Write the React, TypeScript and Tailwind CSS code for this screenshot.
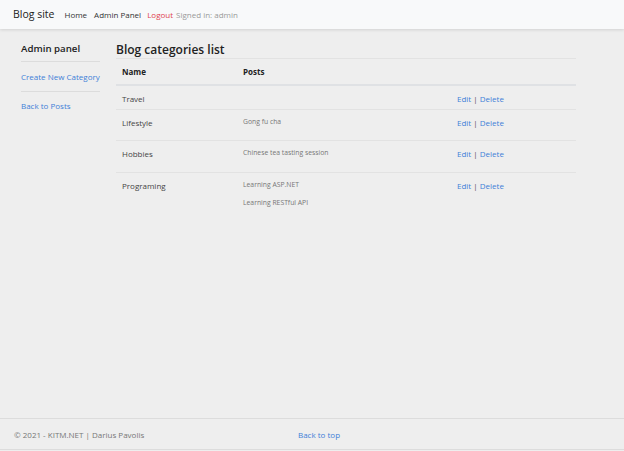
import React from 'react';

const font = { fontFamily: '"Open Sans", "Noto Sans", sans-serif' };

const rows = [
  { name: 'Travel', posts: [] as string[], h: 'h-[25px]', last: false },
  { name: 'Lifestyle', posts: ['Gong fu cha'], h: 'h-[31px]', last: false },
  { name: 'Hobbies', posts: ['Chinese tea tasting session'], h: 'h-[32px]', last: false },
  { name: 'Programing', posts: ['Learning ASP.NET', 'Learning RESTful API'], h: 'h-[45px]', last: true },
];

export default function App() {
  return (
    <div className="w-[624px] h-[451px] bg-[#eeeeee] flex flex-col text-[#333]" style={font}>
      <nav className="h-[29px] bg-[#f8f9fa] shadow-[0_1px_3px_rgba(0,0,0,0.12)] flex items-center pl-[13px] relative z-10">
        <span className="text-[10.5px] text-[#222] mr-[10px]">Blog site</span>
        <div className="flex items-center gap-[5px] text-[8px]">
          <a className="text-[#333]">Home</a>
          <a className="text-[#333] ml-[2px]">Admin Panel</a>
          <a className="text-[#e0424f] ml-[1px]">Logout</a>
          <span className="text-[#999] -ml-[2px]">Signed in: admin</span>
        </div>
      </nav>

      <div className="flex-1 flex pt-[12px]">
        <aside className="ml-[21px] w-[79px]">
          <div className="text-[9.7px] font-semibold text-[#222] h-[20px] pt-[1px]">Admin panel</div>
          <div className="border-t border-[#dcdcdc] h-[30px] flex items-center text-[8px] text-[#3e7fd8]">
            Create New Category
          </div>
          <div className="border-t border-[#dcdcdc] h-[28px] flex items-center text-[8px] text-[#3e7fd8]">
            Back to Posts
          </div>
        </aside>

        <main className="ml-[16px] w-[460px]">
          <h1 className="text-[12px] font-semibold text-[#222] h-[19px] leading-[19px] -mt-[1px]">Blog categories list</h1>
          <table className="w-full table-fixed border-collapse text-[8px] mt-[-1px]">
            <colgroup>
              <col className="w-[127px]" />
              <col className="w-[214px]" />
              <col />
            </colgroup>
            <thead>
              <tr className="h-[26px] border-t border-[#e2e2e2] border-b-2 border-b-[#dfe1e4]">
                <th className="text-left font-bold pl-[6px] pt-[1px] text-[#222]">Name</th>
                <th className="text-left font-bold pt-[1px] text-[#222]">Posts</th>
                <th></th>
              </tr>
            </thead>
            <tbody>
              {rows.map((r) => (
                <tr key={r.name} className={`${r.h} ${r.last ? '' : 'border-b border-[#e2e2e2]'} align-top`}>
                  <td className="pl-[6px] pt-[7px] text-[#444]">{r.name}</td>
                  <td className="pt-[7px] text-[6.8px] text-[#777]">
                    {r.posts.map((p) => (
                      <div key={p} className="h-[18px] leading-[10px]">{p}</div>
                    ))}
                  </td>
                  <td className="pt-[7px] text-[#3e7fd8] whitespace-nowrap">
                    Edit<span className="text-[#555]"> | </span>Delete
                  </td>
                </tr>
              ))}
            </tbody>
          </table>
        </main>
      </div>

      <footer className="h-[32px] border-t border-[#dcdcdc] flex items-center text-[8px] mb-[1px] border-b pt-[1px]">
        <span className="ml-[14px] w-[284px] text-[#777]">© 2021 - KITM.NET | Darius Pavolis</span>
        <a className="text-[#3e7fd8]">Back to top</a>
      </footer>
    </div>
  );
}
